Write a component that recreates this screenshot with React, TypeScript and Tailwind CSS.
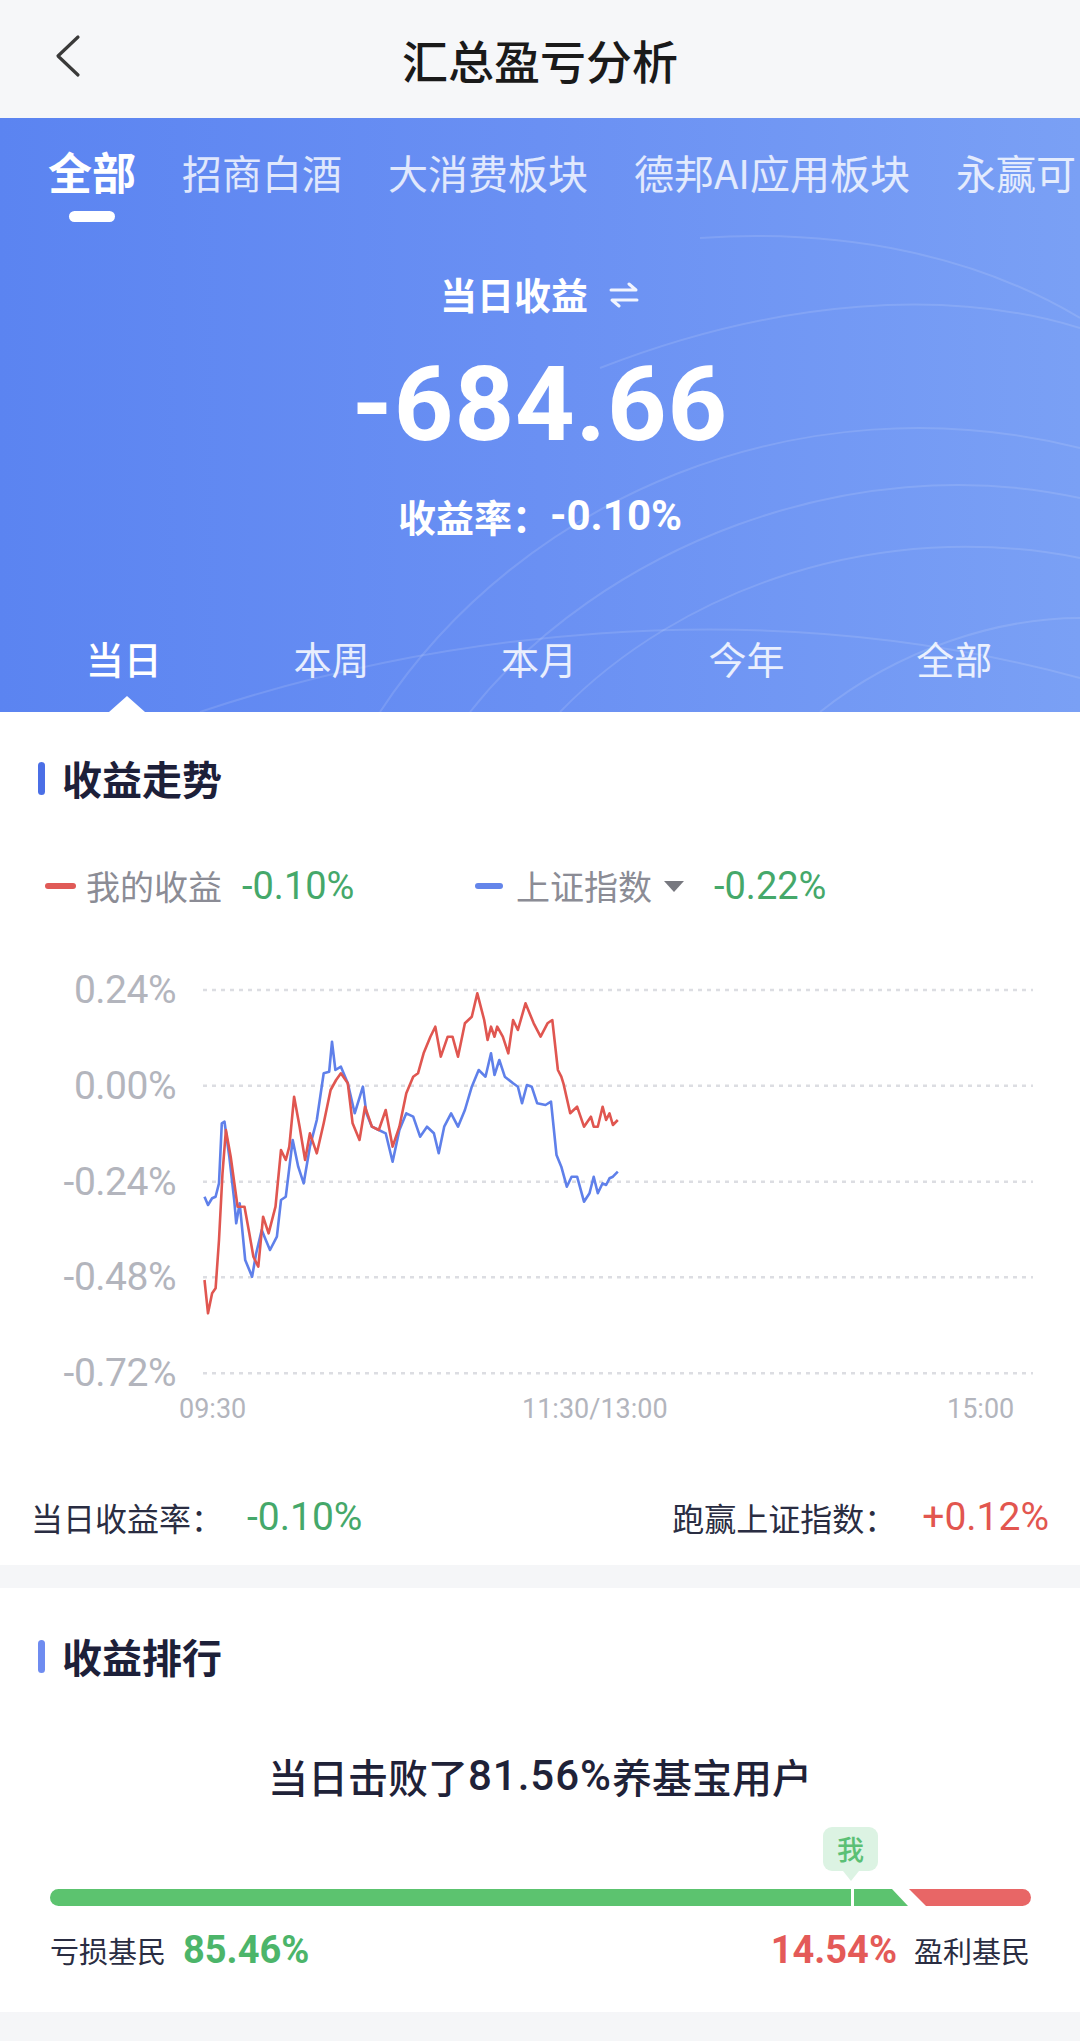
import React from "react";

const red: number[][] = [[297,1020],[302,1120],[308,1060],[313,1045],[318,900],[323,700],[328,570],[335,650],[345,800],[355,800],[362,880],[368,950],[375,980],[382,830],[390,880],[400,800],[408,630],[415,660],[420,620],[427,470],[435,560],[443,660],[450,580],[460,640],[470,550],[480,450],[488,420],[495,400],[505,430],[512,550],[522,600],[530,500],[540,560],[550,570],[560,510],[570,620],[580,560],[590,460],[600,410],[607,400],[615,340],[625,290],[632,260],[640,350],[650,290],[657,290],[665,350],[675,250],[685,230],[693,160],[703,240],[708,300],[713,260],[718,290],[722,260],[730,290],[738,340],[745,240],[752,270],[763,190],[775,250],[785,290],[795,250],[802,240],[810,390],[815,410],[818,430],[828,520],[838,500],[848,560],[858,530],[862,560],[868,560],[875,500],[880,540],[885,520],[890,555],[897,540]];
const blue: number[][] = [[297,770],[302,795],[308,775],[313,770],[318,730],[322,550],[326,545],[333,650],[340,780],[343,850],[348,790],[356,960],[366,1010],[372,940],[380,870],[386,900],[392,930],[402,890],[408,780],[415,770],[425,600],[433,680],[441,730],[450,620],[460,540],[470,400],[478,395],[482,305],[487,390],[495,380],[505,430],[515,520],[527,440],[532,520],[540,560],[550,570],[560,580],[570,665],[580,570],[590,520],[600,530],[610,590],[620,560],[630,580],[637,640],[645,560],[655,520],[665,560],[675,510],[685,440],[695,390],[705,410],[713,340],[718,405],[725,360],[733,410],[745,430],[752,440],[758,490],[765,435],[772,440],[780,490],[792,495],[800,485],[808,645],[815,680],[823,740],[830,710],[838,710],[848,785],[856,760],[862,710],[868,760],[875,730],[880,735],[885,715],[890,710],[897,695]];

const toPath = (pts: number[][]) =>
  pts.map(([x, y], i) => `${i ? "L" : "M"}${(x / 1.452).toFixed(1)} ${(y / 3).toFixed(1)}`).join(" ");

const FONT = { fontFamily: '"Noto Sans CJK SC", "Noto Sans", sans-serif' };
const NUM = { fontFamily: 'Roboto, "Noto Sans", sans-serif' };

export default function App() {
  const fundTabs = ["招商白酒", "大消费板块", "德邦AI应用板块", "永赢可"];
  const periods = ["当日", "本周", "本月", "今年", "全部"];
  const grid = [50, 145.7, 241.7, 337.3, 433.3];
  const ylabels = ["0.24%", "0.00%", "-0.24%", "-0.48%", "-0.72%"];
  return (
    <div className="w-[1080px] bg-white overflow-hidden" style={FONT}>
      {/* Header */}
      <div className="relative h-[118px] bg-[#f6f7f9] flex items-center justify-center">
        <svg className="absolute left-[52px] top-[34px]" width="30" height="44" viewBox="0 0 30 44">
          <path d="M26 3 L6 22 L26 41" fill="none" stroke="#3a3a3a" strokeWidth="3.2" strokeLinecap="round" strokeLinejoin="round" />
        </svg>
        <div className="text-[46px] leading-[52px] font-medium text-[#1a1a1a]">汇总盈亏分析</div>
      </div>

      {/* Blue hero */}
      <div className="relative h-[594px] bg-gradient-to-r from-[#5b84f1] via-[#6a90f3] to-[#7aa0f5] overflow-hidden">
        <svg className="absolute inset-0" width="1080" height="594" viewBox="0 0 1080 594">
          <g fill="none" stroke="#ffffff" strokeOpacity="0.12" strokeWidth="2">
            <path d="M380 594 C 520 380, 800 260, 1080 330" />
            <path d="M470 594 C 600 430, 850 330, 1080 380" />
            <path d="M560 594 C 680 470, 880 400, 1080 440" />
            <path d="M200 594 C 420 520, 750 470, 1080 560" />
            <path d="M600 250 C 780 180, 950 170, 1080 210" />
            <path d="M700 120 C 850 110, 980 140, 1080 200" />
            <path d="M820 594 C 900 530, 1000 500, 1080 500" />
          </g>
        </svg>
        <div className="relative flex flex-col items-stretch">
          {/* fund tabs */}
          <div className="flex items-end gap-[46px] pl-[48px] pt-[25px] whitespace-nowrap">
            <span className="shrink-0 text-[44px] leading-[56px] font-bold text-white">全部</span>
            {fundTabs.map((t) => (
              <span key={t} className="shrink-0 text-[40px] leading-[54px] text-white/80">{t}</span>
            ))}
          </div>
          <div className="ml-[69px] mt-[12px] w-[46px] h-[11px] rounded-full bg-white" />
          {/* 当日收益 */}
          <div className="mt-[54px] flex items-center justify-center gap-[20px] text-white">
            <span className="text-[37px] leading-[37px] font-bold">当日收益</span>
            <svg width="32" height="26" viewBox="0 0 32 26">
              <g fill="none" stroke="#ffffff" strokeOpacity="0.9" strokeWidth="3" strokeLinecap="round" strokeLinejoin="round">
                <path d="M3 8 H28 L21 2" />
                <path d="M29 18 H4 L11 24" />
              </g>
            </svg>
          </div>
          <div className="mt-[40px] text-center text-white text-[104px] leading-[104px] font-bold tracking-[1px]" style={NUM}>
            -684.66
          </div>
          <div className="mt-[40px] flex items-center justify-center text-white font-bold h-[38px]">
            <span className="text-[38px] leading-[38px]">收益率：</span>
            <span className="text-[42px] leading-[38px]" style={NUM}>-0.10%</span>
          </div>
          {/* period tabs */}
          <div className="mt-[104px] grid grid-cols-5 pl-[20px] pr-[22px]">
            {periods.map((p, i) => (
              <div key={p} className="flex justify-center">
                <span className={`text-[38px] leading-[38px] ${i === 0 ? "text-white font-medium" : "text-white/85"}`}>{p}</span>
              </div>
            ))}
          </div>
        </div>
        <div className="absolute left-[109px] bottom-0 w-0 h-0 border-x-[18px] border-x-transparent border-b-[16px] border-b-white" />
      </div>

      {/* 收益走势 */}
      <div className="pt-[46px]">
        <div className="flex items-center pl-[38px] gap-[17px]">
          <div className="w-[7px] h-[33px] rounded-full bg-[#4b6fe6]" />
          <span className="text-[40px] leading-[40px] font-bold text-[#1d2039]">收益走势</span>
        </div>
        <div className="mt-[70px] relative h-[36px]">
          <div className="absolute left-[45px] top-0 h-[36px] flex items-center">
            <div className="w-[31px] h-[6px] rounded-full bg-[#e05a57]" />
            <span className="ml-[10px] text-[34px] leading-[36px] text-[#8b8c95]">我的收益</span>
            <span className="ml-[20px] text-[38px] leading-[36px] text-[#45a86a]" style={NUM}>-0.10%</span>
          </div>
          <div className="absolute left-[475px] top-0 h-[36px] flex items-center">
            <div className="w-[28px] h-[6px] rounded-full bg-[#6485ea]" />
            <span className="ml-[13px] text-[34px] leading-[36px] text-[#8b8c95]">上证指数</span>
            <svg className="ml-[10px]" width="24" height="14" viewBox="0 0 24 14">
              <path d="M2 2 H22 L12 13 Z" fill="#77787f" />
            </svg>
            <span className="ml-[28px] text-[38px] leading-[36px] text-[#45a86a]" style={NUM}>-0.22%</span>
          </div>
        </div>

        {/* chart */}
        <div className="relative mt-[36px] h-[500px]">
          <svg className="absolute inset-0" width="1080" height="500" viewBox="0 0 1080 500">
            {grid.map((y) => (
              <line key={y} x1="203" x2="1033" y1={y} y2={y} stroke="#dcdde2" strokeWidth="2.5" strokeDasharray="4 5" />
            ))}
            <path d={toPath(blue)} fill="none" stroke="#5f80ea" strokeWidth="2.6" strokeLinejoin="round" />
            <path d={toPath(red)} fill="none" stroke="#e05650" strokeWidth="2.6" strokeLinejoin="round" />
          </svg>
          {grid.map((y, i) => (
            <div
              key={i}
              className="absolute left-0 w-[176px] text-right text-[39px] leading-[40px] tracking-[-0.5px] text-[#b3b5bd]"
              style={{ top: y - 20, ...NUM }}
            >
              {ylabels[i]}
            </div>
          ))}
          <div className="absolute left-[179px] top-[455px] text-[27px] leading-[28px] text-[#b3b5bd]" style={NUM}>09:30</div>
          <div className="absolute left-[522px] top-[455px] text-[27px] leading-[28px] text-[#b3b5bd]" style={NUM}>11:30/13:00</div>
          <div className="absolute left-[947px] top-[455px] text-[27px] leading-[28px] text-[#b3b5bd]" style={NUM}>15:00</div>
        </div>

        <div className="mt-[60px] flex items-center justify-between pl-[31px] pr-[31px] h-[34px]">
          <div className="flex items-center">
            <span className="text-[32px] leading-[34px] text-[#2a2d42]">当日收益率：</span>
            <span className="ml-[24px] text-[39px] leading-[34px] text-[#45a86a]" style={NUM}>-0.10%</span>
          </div>
          <div className="flex items-center">
            <span className="text-[32px] leading-[34px] text-[#2a2d42]">跑赢上证指数：</span>
            <span className="ml-[26px] text-[39px] leading-[34px] text-[#e2564f]" style={NUM}>+0.12%</span>
          </div>
        </div>
        <div className="mt-[31px] h-[23px] bg-[#f5f6f8]" />
      </div>

      {/* 收益排行 */}
      <div className="pt-[48px]">
        <div className="flex items-center pl-[38px] gap-[17px]">
          <div className="w-[7px] h-[33px] rounded-full bg-[#6f8cf0]" />
          <span className="text-[40px] leading-[40px] font-bold text-[#1d2039]">收益排行</span>
        </div>
        <div className="mt-[80px] flex items-center justify-center h-[40px] font-medium text-[#1f2238]">
          <span className="text-[40px] leading-[40px]">当日击败了</span>
          <span className="text-[42px] leading-[40px] tracking-[1px]" style={NUM}>81.56%</span>
          <span className="text-[40px] leading-[40px]">养基宝用户</span>
        </div>
        <div className="relative mt-[31px] pt-[62px] pl-[50px]">
          <div className="absolute left-[823px] top-0 flex flex-col items-center">
            <div className="w-[55px] h-[44px] rounded-[9px] bg-[#dcf3e3] flex items-center justify-center">
              <span className="text-[27px] leading-[28px] font-medium text-[#5bc075]">我</span>
            </div>
            <div className="w-0 h-0 border-x-[8px] border-x-transparent border-t-[10px] border-t-[#dcf3e3]" />
          </div>
          <svg width="981" height="17" viewBox="0 0 981 17" className="block">
            <path d="M8.5 0 H842 L858 17 H8.5 A8.5 8.5 0 0 1 8.5 0 Z" fill="#5cc36f" />
            <path d="M859 0 H972.5 A8.5 8.5 0 0 1 972.5 17 H876 Z" fill="#e86666" />
            <rect x="801" y="0" width="3" height="17" fill="#ffffff" />
          </svg>
        </div>
        <div className="mt-[25px] flex items-center justify-between pl-[50px] pr-[50px] h-[38px]">
          <div className="flex items-center">
            <span className="text-[29px] leading-[38px] text-[#2a2d42]">亏损基民</span>
            <span className="ml-[17px] text-[38px] leading-[38px] font-bold text-[#4cb56a]" style={NUM}>85.46%</span>
          </div>
          <div className="flex items-center">
            <span className="text-[38px] leading-[38px] font-bold text-[#e45a58]" style={NUM}>14.54%</span>
            <span className="ml-[17px] text-[29px] leading-[38px] text-[#2a2d42]">盈利基民</span>
          </div>
        </div>
        <div className="mt-[43px] h-[29px] bg-[#f5f6f8]" />
      </div>
    </div>
  );
}
